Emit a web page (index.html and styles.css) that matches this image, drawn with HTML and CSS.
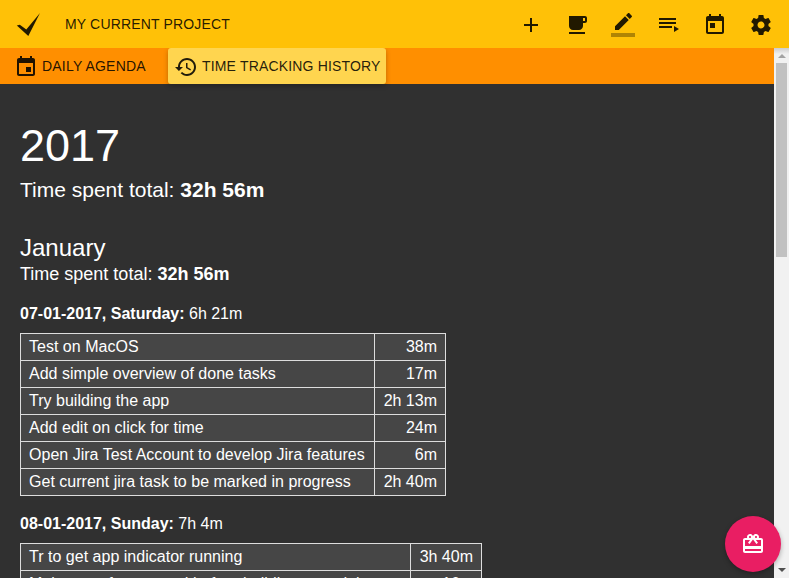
FILE: index.html
```html
<!DOCTYPE html>
<html lang="en">
<head>
<meta charset="utf-8">
<title>My Current Project</title>
<link rel="stylesheet" href="styles.css">
</head>
<body>
<header class="toolbar">
  <svg class="logo" viewBox="0 0 24 24"><path d="M.8 12.4L3.8 11.8 10.3 16.6 24 0 12.3 23Z"/></svg>
  <div class="project">MY CURRENT PROJECT</div>
  <nav class="actions">
    <svg viewBox="0 0 24 24"><path d="M19 13h-6v6h-2v-6H5v-2h6V5h2v6h6v2z"/></svg>
    <svg viewBox="0 0 24 24"><path d="M20 3H4v10c0 2.21 1.79 4 4 4h6c2.21 0 4-1.79 4-4v-3h2c1.11 0 2-.89 2-2V5c0-1.11-.89-2-2-2zm0 5h-2V5h2v3zM4 19h16v2H4z"/></svg>
    <svg viewBox="0 0 24 24"><path d="M17.75 7L14 3.25l-10 10V17h3.75l10-10zm2.96-2.96c.39-.39.39-1.02 0-1.41L18.37.29c-.39-.39-1.02-.39-1.41 0L15 2.25 18.75 6l1.96-1.96z"/><path fill-opacity=".36" d="M0 20h24v4H0z"/></svg>
    <svg viewBox="0 0 24 24"><path d="M19 9H2v2h17V9zm0-4H2v2h17V5zM2 15h13v-2H2v2zm15-2v6l5-3-5-3z"/></svg>
    <svg viewBox="0 0 24 24"><path d="M19 3h-1V1h-2v2H8V1H6v2H5c-1.11 0-1.99.9-1.99 2L3 19c0 1.1.89 2 2 2h14c1.1 0 2-.9 2-2V5c0-1.1-.9-2-2-2zm0 16H5V8h14v11zM7 10h5v5H7z"/></svg>
    <svg viewBox="0 0 24 24"><path d="M19.43 12.98c.04-.32.07-.64.07-.98s-.03-.66-.07-.98l2.11-1.65c.19-.15.24-.42.12-.64l-2-3.46c-.12-.22-.39-.3-.61-.22l-2.49 1c-.52-.4-1.08-.73-1.69-.98l-.38-2.65C14.46 2.18 14.25 2 14 2h-4c-.25 0-.46.18-.49.42l-.38 2.65c-.61.25-1.17.59-1.69.98l-2.49-1c-.23-.09-.49 0-.61.22l-2 3.46c-.13.22-.07.49.12.64l2.11 1.65c-.04.32-.07.65-.07.98s.03.66.07.98l-2.11 1.65c-.19.15-.24.42-.12.64l2 3.46c.12.22.39.3.61.22l2.49-1c.52.4 1.08.73 1.69.98l.38 2.65c.03.24.24.42.49.42h4c.25 0 .46-.18.49-.42l.38-2.65c.61-.25 1.17-.59 1.69-.98l2.49 1c.23.09.49 0 .61-.22l2-3.46c.12-.22.07-.49-.12-.64l-2.11-1.65zM12 15.5c-1.93 0-3.5-1.57-3.5-3.5s1.57-3.5 3.5-3.5 3.5 1.57 3.5 3.5-1.57 3.5-3.5 3.5z"/></svg>
  </nav>
</header>
<div class="body">
  <div class="view">
    <nav class="tabs">
      <div class="tab">
        <svg viewBox="0 0 24 24"><path d="M17 12h-5v5h5v-5zM16 1v2H8V1H6v2H5c-1.11 0-1.99.9-1.99 2L3 19c0 1.1.89 2 2 2h14c1.1 0 2-.9 2-2V5c0-1.1-.9-2-2-2h-1V1h-2zm3 18H5V8h14v11z"/></svg>
        <span>DAILY AGENDA</span>
      </div>
      <div class="tab active">
        <svg viewBox="0 0 24 24"><path d="M13 3c-4.97 0-9 4.03-9 9H1l3.89 3.89.07.14L9 12H6c0-3.87 3.13-7 7-7s7 3.13 7 7-3.13 7-7 7c-1.93 0-3.68-.79-4.94-2.06l-1.42 1.42C8.27 19.99 10.51 21 13 21c4.97 0 9-4.03 9-9s-4.03-9-9-9zm-1 5v5l4.28 2.54.72-1.21-3.5-2.08V8H12z"/></svg>
        <span>TIME TRACKING HISTORY</span>
      </div>
    </nav>
    <main class="history">
      <h1>2017</h1>
      <p class="year-total">Time spent total: <b>32h 56m</b></p>
      <h2>January</h2>
      <p class="month-total">Time spent total: <b>32h 56m</b></p>
      <p class="day"><b>07-01-2017, Saturday:</b> 6h 21m</p>
      <table>
        <tr><td class="task">Test on MacOS</td><td class="time">38m</td></tr>
        <tr><td class="task">Add simple overview of done tasks</td><td class="time">17m</td></tr>
        <tr><td class="task">Try building the app</td><td class="time">2h 13m</td></tr>
        <tr><td class="task">Add edit on click for time</td><td class="time">24m</td></tr>
        <tr><td class="task">Open Jira Test Account to develop Jira features</td><td class="time">6m</td></tr>
        <tr><td class="task">Get current jira task to be marked in progress</td><td class="time">2h 40m</td></tr>
      </table>
      <p class="day"><b>08-01-2017, Sunday:</b> 7h 4m</p>
      <table class="wide">
        <tr><td class="task">Tr to get app indicator running</td><td class="time">3h 40m</td></tr>
        <tr><td class="task">Make sure frames end before building a modal</td><td class="time">16m</td></tr>
      </table>
    </main>
  </div>
  <div class="scrollbar">
    <i class="arrow up"></i>
    <div class="thumb"></div>
    <i class="arrow down"></i>
  </div>
</div>
<div class="fab"><svg viewBox="0 0 24 24"><path d="M20 6h-2.18c.11-.31.18-.65.18-1 0-1.66-1.34-3-3-3-1.05 0-1.96.54-2.5 1.35l-.5.67-.5-.68C10.96 2.54 10.05 2 9 2 7.34 2 6 3.34 6 5c0 .35.07.69.18 1H4c-1.11 0-1.99.89-1.99 2L2 19c0 1.11.89 2 2 2h16c1.11 0 2-.89 2-2V8c0-1.11-.89-2-2-2zm-5-2c.55 0 1 .45 1 1s-.45 1-1 1-1-.45-1-1 .45-1 1-1zM9 4c.55 0 1 .45 1 1s-.45 1-1 1-1-.45-1-1 .45-1 1-1zm11 15H4v-2h16v2zm0-5H4V8h5.08L7 10.83 8.62 12 11 8.76l1-1.36 1 1.36L15.38 12 17 10.83 14.92 8H20v6z"/></svg></div>
</body>
</html>
```
FILE: styles.css
```css
* { box-sizing: border-box; }
body {
  margin: 0;
  height: 578px;
  overflow: hidden;
  display: flex;
  flex-direction: column;
  background: #303030;
  color: #fff;
  font-family: "Liberation Sans", Arial, sans-serif;
  font-size: 16px;
}
svg { display: block; width: 24px; height: 24px; fill: currentColor; flex: none; }
h1, h2, p { margin: 0; font-weight: 400; }

.toolbar {
  height: 48px;
  flex: none;
  display: flex;
  align-items: center;
  padding: 2px 16px 0;
  background: #ffc107;
  color: rgba(0, 0, 0, .87);
}
.project { margin: -3px 0 0 25px; font-size: 14px; letter-spacing: .16px; }
.actions { margin-left: auto; display: flex; gap: 22px; }

.body { flex: 1; min-height: 0; display: flex; }
.view { flex: 1; min-width: 0; overflow: hidden; }
.tabs {
  height: 36px;
  display: flex;
  background: #ff8f00;
  color: rgba(0, 0, 0, .87);
  font-size: 14px;
  letter-spacing: .2px;
  padding-left: 8px;
}
.tab {
  display: flex;
  align-items: center;
  gap: 4px;
  width: 144px;
  padding-left: 6px;
  white-space: nowrap;
}
.tab svg { margin-top: 2px; }
.tab.active {
  width: 218px;
  margin-left: 16px;
  background: #ffd54f;
  border-radius: 3px;
  box-shadow: 0 2px 5px rgba(0, 0, 0, .26);
  letter-spacing: .17px;
}

.history { padding: 36px 20px 0; }
h1 { font-size: 45px; line-height: 52px; }
.year-total { font-size: 21px; line-height: 24px; margin-top: 6px; }
h2 { font-size: 24px; line-height: 28px; margin-top: 32px; }
.month-total { font-size: 18px; line-height: 20px; margin-top: 2px; }
.day { line-height: 18px; margin: 21px 0 10px; }
.day:nth-of-type(n+4) { margin-top: 19px; }
table {
  width: 426px;
  table-layout: fixed;
  border-collapse: collapse;
}
table.wide { width: 462px; }
td {
  height: 27px;
  padding: 0 8px;
  border: 1px solid #ddd;
  background: #464646;
  line-height: 18px;
  white-space: nowrap;
}
.task { letter-spacing: .016px; }
.time { width: 71px; text-align: right; }

.scrollbar {
  width: 15px;
  flex: none;
  display: flex;
  flex-direction: column;
  align-items: center;
  padding: 6px 0 6px;
  background: linear-gradient(#ccc, #f1f1f1 6px);
}
.arrow { border: 4px solid transparent; border-top: 0; border-bottom: 4px solid #a3a3a3; }
.thumb { width: 11px; height: 194px; margin-top: 5px; background: #c1c1c1; }
.arrow.down { margin-top: auto; border-bottom: 0; border-top: 4px solid #505050; }

.fab {
  position: absolute;
  left: 725px;
  top: 516px;
  width: 56px;
  height: 56px;
  border-radius: 50%;
  display: flex;
  align-items: center;
  justify-content: center;
  background: #e91e63;
  box-shadow: 0 2px 5px rgba(0, 0, 0, .3);
}
```
